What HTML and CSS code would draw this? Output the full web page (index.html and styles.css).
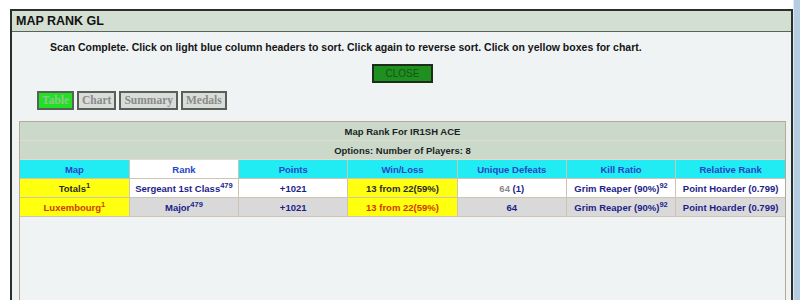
FILE: index.html
```html
<!DOCTYPE html>
<html lang="en">
<head>
    <meta charset="UTF-8">
    <title>Map Rank GL</title>
    <link rel="stylesheet" href="styles.css">
</head>
<body>
    <div class="screen">
        <div class="window">
            <div class="titlebar">MAP RANK GL</div>
            <div class="content">
                <p class="hint">Scan Complete. Click on light blue column headers to sort. Click again to reverse sort. Click on yellow boxes for chart.</p>
                <div class="close-row"><button class="close">CLOSE</button></div>
                <div class="tabs">
                    <span class="tab active">Table</span>
                    <span class="tab">Chart</span>
                    <span class="tab">Summary</span>
                    <span class="tab">Medals</span>
                </div>
                <div class="panel">
                    <table>
                        <tr class="caption"><td colspan="7">Map Rank For IR1SH ACE</td></tr>
                        <tr class="caption"><td colspan="7">Options: Number of Players: 8</td></tr>
                        <tr class="head">
                            <th>Map</th>
                            <th class="plain">Rank</th>
                            <th>Points</th>
                            <th>Win/Loss</th>
                            <th>Unique Defeats</th>
                            <th>Kill Ratio</th>
                            <th>Relative Rank</th>
                        </tr>
                        <tr class="row-white">
                            <td class="map">Totals<sup>1</sup></td>
                            <td>Sergeant 1st Class<sup>479</sup></td>
                            <td>+1021</td>
                            <td class="yellow">13 from 22(59%)</td>
                            <td><span class="muted">64</span> (1)</td>
                            <td>Grim Reaper (90%)<sup>92</sup></td>
                            <td>Point Hoarder (0.799)</td>
                        </tr>
                        <tr class="row-grey">
                            <td class="map red">Luxembourg<sup>1</sup></td>
                            <td>Major<sup>479</sup></td>
                            <td>+1021</td>
                            <td class="yellow red">13 from 22(59%)</td>
                            <td>64</td>
                            <td>Grim Reaper (90%)<sup>92</sup></td>
                            <td>Point Hoarder (0.799)</td>
                        </tr>
                    </table>
                </div>
            </div>
        </div>
        <div class="frame-edge"></div>
    </div>
</body>
</html>
```

FILE: styles.css
```css
body {
    margin: 0;
    background: #ffffff;
    font-family: 'Liberation Sans', Arial, sans-serif;
    overflow: hidden;
}
.screen {
    display: flex;
    height: 300px;
}
.window {
    flex: 1;
    margin: 9px 0 0 10px;
    border: 2px solid #2b2f2b;
    border-bottom: none;
    display: flex;
    flex-direction: column;
    overflow: hidden;
}
.frame-edge {
    width: 6px;
    background: #b4cde0;
    border-left: 1px solid #dfe9f1;
}
.titlebar {
    height: 20px;
    line-height: 21px;
    padding-left: 4px;
    background: #d3dfd3;
    border-bottom: 1px solid #5a625a;
    font-size: 12.5px;
    font-weight: bold;
    color: #111;
}
.content {
    flex: 1;
    display: flex;
    flex-direction: column;
    min-height: 0;
    background: #f0f3f4;
    padding: 0 5px 0 7px;
}
.hint {
    margin: 9px 0 0 31px;
    font-size: 10.5px;
    font-weight: bold;
    color: #151515;
    line-height: 12px;
}
.close-row {
    display: flex;
    justify-content: center;
    margin-top: 11px;
}
.close {
    width: 61px;
    height: 19px;
    background: #1f8f1f;
    border: 2px solid #1a2e1a;
    color: #175517;
    font-family: 'Liberation Sans', Arial, sans-serif;
    font-size: 10px;
    padding: 0;
}
.tabs {
    display: flex;
    gap: 3px;
    margin: 8px 0 0 18px;
}
.tab {
    height: 15px;
    line-height: 15px;
    padding: 0 3px;
    border: 2px solid #5a5f5a;
    background: #d9ddd9;
    font-family: 'Liberation Serif', 'Times New Roman', serif;
    font-size: 11.5px;
    font-weight: bold;
    color: #8a8a8a;
}
.tab.active {
    background: #22e022;
    color: #8fc88f;
}
.panel {
    flex: 1;
    margin-top: 11px;
    border: 1px solid #b5aa98;
    border-bottom: none;
}
table {
    width: 100%;
    border-collapse: collapse;
    table-layout: fixed;
}
th, td {
    height: 18px;
    padding: 0;
    text-align: center;
    font-size: 9.5px;
    font-weight: bold;
    border: 1px solid #cfc4b4;
    color: #1d1d8a;
    white-space: nowrap;
}
tr:first-child td {
    border-top: none;
}
tr td:first-child, tr th:first-child {
    border-left: none;
}
tr td:last-child, tr th:last-child {
    border-right: none;
}
.caption td {
    background: #cbd9cb;
    color: #1e1e1e;
    border-left: none;
    border-right: none;
    border-color: #e2dccd;
}
.head th {
    background: #21ecf3;
    color: #2545c8;
}
.head th.plain {
    background: #ffffff;
}
.row-white td {
    background: #ffffff;
}
.row-grey td {
    background: #d9d9d9;
}
td.map, td.yellow {
    background: #ffff10 !important;
    color: #2a2a2a;
}
td.red {
    color: #d23a00;
}
.muted {
    color: #8a8a8a;
}
sup {
    font-size: 7.5px;
    line-height: 0;
    vertical-align: 4px;
}
```
